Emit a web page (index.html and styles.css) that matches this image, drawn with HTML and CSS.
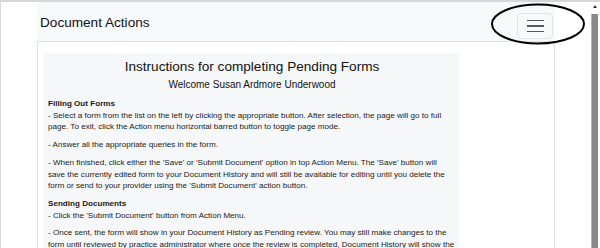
FILE: index.html
```html
<!DOCTYPE html>
<html lang="en">
<head>
    <meta charset="UTF-8">
    <meta name="viewport" content="width=device-width, initial-scale=1.0">
    <title>Document Actions</title>
    <link rel="stylesheet" href="styles.css">
</head>
<body>
    <div class="frame">
        <div class="gutter"></div>
        <div class="page">
            <div class="navbar">
                <span class="brand">Document Actions</span>
                <button class="toggler" type="button">
                    <span class="bar"></span>
                    <span class="bar"></span>
                    <span class="bar"></span>
                </button>
            </div>
            <div class="content">
                <div class="instructions">
                    <h3>Instructions for completing Pending Forms</h3>
                    <h5>Welcome Susan Ardmore Underwood</h5>
                    <div class="section-title">Filling Out Forms</div>
                    <p>- Select a form from the list on the left by clicking the appropriate button. After selection, the page will go to full page. To exit, click the Action menu horizontal barred button to toggle page mode.</p>
                    <p>- Answer all the appropriate queries in the form.</p>
                    <p>- When finished, click either the 'Save' or 'Submit Document' option in top Action Menu. The 'Save' button will save the currently edited form to your Document History and will still be available for editing until you delete the form or send to your provider using the 'Submit Document' action button.</p>
                    <div class="section-title">Sending Documents</div>
                    <p>- Click the 'Submit Document' button from Action Menu.</p>
                    <p>- Once sent, the form will show in your Document History as Pending review. You may still make changes to the form until reviewed by practice administrator where once the review is completed, Document History will show the form as Reviewed.</p>
                </div>
            </div>
        </div>
        <div class="side"></div>
        <div class="scrollbar">
            <div class="arrow"></div>
            <div class="thumb"></div>
        </div>
    </div>

    <!-- annotation circled round the menu button -->
    <svg class="mark" width="600" height="248" viewBox="0 0 600 248">
        <ellipse cx="538" cy="24" rx="46" ry="19.5" fill="none" stroke="#000" stroke-width="2"/>
    </svg>
</body>
</html>
```

FILE: styles.css
```css
body {
    margin: 0;
    font-family: "Liberation Sans", Arial, sans-serif;
    color: #212529;
    background-color: white;
    overflow: hidden;
}

.frame {
    display: flex;
    height: 246px;
    border-top: 2px solid #d6d6d6;
    border-left: 1px solid #d6d6d6;
    overflow: hidden;
}

.gutter {
    width: 36px;
    flex: none;
}

.page {
    width: 518px;
    flex: none;
    display: flex;
    flex-direction: column;
    min-height: 0;
}

.navbar {
    flex: none;
    height: 39px;
    background-color: #f8f9fa;
    border-bottom: 1px solid #dee2e6;
    display: flex;
    align-items: center;
    justify-content: space-between;
    padding: 0 2px 0 3px;
}

.brand {
    font-size: 13.6px;
    color: #111;
    margin-top: 2px;
}

.toggler {
    width: 36px;
    height: 26px;
    margin-top: 9px;
    background: transparent;
    border: 1px solid #e2e3e5;
    border-radius: 4px;
    display: flex;
    flex-direction: column;
    align-items: center;
    justify-content: center;
    gap: 4px;
    padding: 0;
}

.toggler .bar {
    display: block;
    width: 17px;
    height: 1.5px;
    background-color: #5a5a5a;
}

.content {
    flex: 1;
    min-height: 0;
    overflow: hidden;
    border-left: 1px solid #dee2e6;
    border-right: 1px solid #dee2e6;
    padding: 11px 0 0 5px;
}

.instructions {
    width: 408px;
    height: 300px;
    background-color: #f6f7f9;
    padding: 5px 3px 5px 5px;
    font-size: 8.1px;
    line-height: 11.7px;
    color: #1a1a1a;
}

.instructions h3 {
    margin: 0;
    text-align: center;
    font-weight: normal;
    font-size: 13.6px;
    line-height: 18px;
    color: #111;
}

.instructions h5 {
    margin: 2px 0 6px;
    text-align: center;
    font-weight: normal;
    font-size: 10px;
    line-height: 14px;
    color: #111;
}

.section-title {
    font-weight: bold;
}

.instructions p {
    margin: 0 0 6px;
}

.side {
    flex: 1;
}

.scrollbar {
    width: 9px;
    flex: none;
    margin-right: 1px;
    display: flex;
    flex-direction: column;
    align-items: center;
}

.arrow {
    margin-top: 3px;
    width: 0;
    height: 0;
    border-left: 2px solid transparent;
    border-right: 2px solid transparent;
    border-bottom: 3px solid #333;
}

.thumb {
    margin-top: 6px;
    width: 6px;
    flex: 1;
    background-color: #8a8a8a;
    border-left: 1px solid #b5b5b5;
}

.mark {
    position: absolute;
    top: 0;
    left: 0;
    pointer-events: none;
}
```
